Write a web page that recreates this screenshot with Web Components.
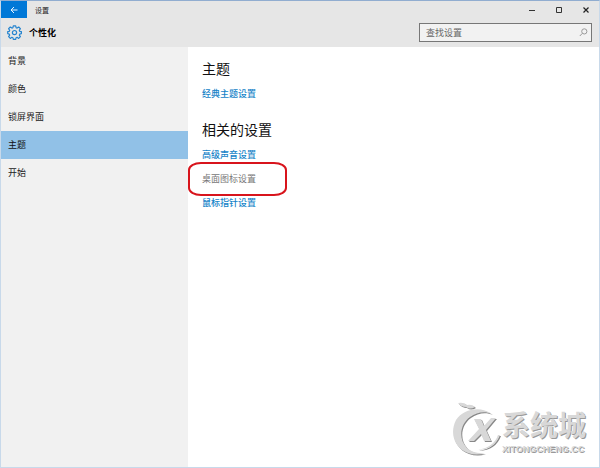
<!DOCTYPE html>
<html lang="zh-CN">
<head>
<meta charset="utf-8">
<title>设置</title>
<style>
html, body { height: 100%; margin: 0; }
body { font-family: "Noto Sans CJK SC", sans-serif; font-size: 9px; line-height: 12px; color: #222; background: #fff; }
settings-window { min-height: 100%; }
</style>
</head>
<body>
<settings-window></settings-window>
<script>
const define = (name, html) => {
  const t = document.createElement('template');
  t.innerHTML = html;
  customElements.define(name, class extends HTMLElement {
    constructor() {
      super();
      this.attachShadow({ mode: 'open' }).append(t.content.cloneNode(true));
    }
  });
};

define('title-bar', `
<style>
:host { display: flex; height: 17px; align-items: stretch; font-size: 7px; }
button { border: 0; padding: 0; margin: 0; background: none; display: grid; place-items: center; width: 27px; }
.back { background: #0078d7; width: 26px; }
span { flex: 1; padding-left: 8px; align-self: center; }
svg { display: block; fill: none; }
</style>
<button class="back" aria-label="返回"><svg width="8" height="8" viewBox="0 0 8 8" stroke="#e8f4ff"><path d="M7.5 4H1M4 1 1 4l3 3"/></svg></button>
<span>设置</span>
<button aria-label="最小化"><svg width="8" height="8" stroke="#333"><path d="M1 4.5h6"/></svg></button>
<button aria-label="最大化"><svg width="8" height="8" stroke="#333"><path d="M1.5 1.5h5v5h-5z"/></svg></button>
<button aria-label="关闭"><svg width="8" height="8" stroke="#222" stroke-width="1.2"><path d="M1.5 1.5l5 5M6.5 1.5l-5 5"/></svg></button>
`);

define('search-box', `
<style>
:host { display: block; width: 173px; }
label { display: flex; align-items: center; box-sizing: border-box; height: 19px; border: 1px solid #777; background: #f2f2f2; padding: 0 3px 0 6px; }
input { flex: 1; min-width: 0; border: 0; padding: 0; background: none; font: inherit; outline: 0; }
input::placeholder { color: #666; opacity: 1; }
svg { fill: none; }
</style>
<label><input type="search" placeholder="查找设置" aria-label="查找设置">
<svg width="9" height="9" viewBox="0 0 9 9" stroke="#999"><circle cx="5.3" cy="3.4" r="2.6"/><path d="M3.4 5.3.8 8"/></svg></label>
`);

define('page-header', `
<style>
:host { display: flex; align-items: center; height: 29px; padding: 0 7px 0 6px; }
h1 { flex: 1; margin: 0 0 0 7px; font-size: 9px; font-weight: 700; color: #000; }
svg { fill: none; }
</style>
<svg width="15" height="15" viewBox="0 0 15 15" stroke="#2584cf" stroke-width="1.2" stroke-linejoin="round">
<path d="M6.3.8h2.4l.4 1.9 1 .4 1.6-1.1 1.7 1.7-1.1 1.6.4 1 1.7.4v1.9l-1.7.5-.4 1 1.1 1.6-1.7 1.7-1.6-1.1-1 .4-.4 1.6H6.3l-.4-1.6-1-.4-1.6 1.1-1.7-1.7 1.1-1.6-.4-1L.7 8.6V6.7l1.6-.4.4-1-1.1-1.6L3.3 2l1.6 1.1 1-.4z"/><circle cx="7.5" cy="7.6" r="2.1"/></svg>
<h1>个性化</h1>
<search-box></search-box>
`);

define('nav-item', `
<style>
:host { display: block; }
a { display: flex; align-items: center; height: 28px; padding-left: 7px; color: #222; text-decoration: none; }
:host([selected]) a { background: #91c1e7; color: #111; }
</style>
<a href="#"><slot></slot></a>
`);

define('side-nav', `
<style>
:host { display: block; background: #f1f1f1; }
</style>
<nav><nav-item>背景</nav-item><nav-item>颜色</nav-item><nav-item>锁屏界面</nav-item><nav-item selected>主题</nav-item><nav-item>开始</nav-item></nav>
`);

define('setting-link', `
<style>
:host { display: flex; align-items: center; height: 24px; position: relative; }
a { color: #1583c8; text-decoration: none; font-weight: 500; }
:host([marked]) a { color: #777; font-weight: 400; }
i { display: none; }
:host([marked]) i { display: block; position: absolute; left: -14px; top: -5px; width: 99px; height: 34px; box-sizing: border-box; border: 2px solid #d8141c; border-radius: 13px / 8px; pointer-events: none; }
</style>
<a href="#"><slot></slot></a><i></i>
`);

define('setting-group', `
<style>
:host { display: block; }
h2 { margin: 0 0 4px; font-size: 14px; line-height: 20px; font-weight: 400; color: #111; }
</style>
<h2><slot name="title"></slot></h2><slot></slot>
`);

define('site-mark', `
<style>
:host { display: flex; align-items: flex-start; color: #d8d8d8; }
svg { display: block; }
.t { display: flex; flex-direction: column; gap: 7px; padding-top: 8px; text-shadow: 1px 1px 0 #999; }
b { font-size: 28px; line-height: 28px; font-weight: 700; }
small { font: 700 9px/9px "Liberation Sans", sans-serif; }
</style>
<svg width="50" height="56" viewBox="0 0 50 56">
<defs><g id="mark"><path d="M6 1q6-1 9 2 5-1 8 2-5 3-9 0-5 0-8-4"/><path d="M40 12C29 4 12 6 4 18-3 32 3 46 16 51q9 3 17 0-12 1-18-5C6 37 8 22 18 15 25 10 33 9 40 12"/><path d="M22 17h7l3 7 7-8h5L34 28l5 11h-7l-3-7-7 7h-6l11-12z"/><path d="M48 33Q43 47 26 48 42 45 46 33z"/></g></defs>
<use href="#mark" fill="#888" x="1" y="1"/><use href="#mark" fill="#d8d8d8"/>
</svg>
<div class="t"><b>系统城</b><small>XITONGCHENG.CC</small></div>
`);

define('settings-window', `
<style>
:host { display: grid; grid-template-rows: auto 1fr; box-sizing: border-box; border: 1px solid #c8d9ea; border-top-color: #91add0; position: relative; }
header { background: #e6e6e6; }
.body { display: grid; grid-template-columns: 187px 1fr; }
main { padding: 11px 14px; display: flex; flex-direction: column; gap: 13px; }
site-mark { position: absolute; right: 13px; bottom: 9px; }
</style>
<header><title-bar></title-bar><page-header></page-header></header>
<div class="body"><side-nav></side-nav>
<main>
<setting-group><span slot="title">主题</span><setting-link>经典主题设置</setting-link></setting-group>
<setting-group><span slot="title">相关的设置</span><setting-link>高级声音设置</setting-link><setting-link marked>桌面图标设置</setting-link><setting-link>鼠标指针设置</setting-link></setting-group>
</main></div>
<site-mark></site-mark>
`);
</script>
</body>
</html>
